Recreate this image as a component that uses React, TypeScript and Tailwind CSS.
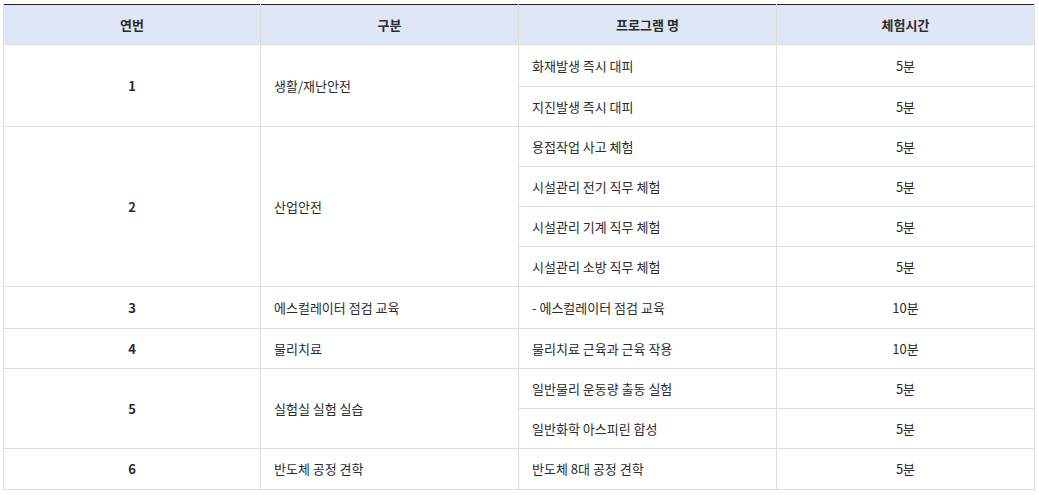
const rows = [
  {
    no: '1',
    group: '생활/재난안전',
    items: [
      { name: '화재발생 즉시 대피', time: '5분', h: 'h-[42px]' },
      { name: '지진발생 즉시 대피', time: '5분', h: 'h-[40px]' },
    ],
  },
  {
    no: '2',
    group: '산업안전',
    items: [
      { name: '용접작업 사고 체험', time: '5분', h: 'h-[40px]' },
      { name: '시설관리 전기 직무 체험', time: '5분', h: 'h-[40px]' },
      { name: '시설관리 기계 직무 체험', time: '5분', h: 'h-[40px]' },
      { name: '시설관리 소방 직무 체험', time: '5분', h: 'h-[40px]' },
    ],
  },
  { no: '3', group: '에스컬레이터 점검 교육', items: [{ name: '- 에스컬레이터 점검 교육', time: '10분', h: 'h-[42px]' }] },
  { no: '4', group: '물리치료', items: [{ name: '물리치료 근육과 근육 작용', time: '10분', h: 'h-[40px]' }] },
  {
    no: '5',
    group: '실험실 실험 실습',
    items: [
      { name: '일반물리 운동량 출동 실험', time: '5분', h: 'h-[40px]' },
      { name: '일반화학 아스피린 합성', time: '5분', h: 'h-[40px]' },
    ],
  },
  { no: '6', group: '반도체 공정 견학', items: [{ name: '반도체 8대 공정 견학', time: '5분', h: 'h-[41px]' }] },
];

const App = () => {
  return (
    <div
      className="w-[1039px] h-[495px] bg-white pl-[3px] pt-[4px]"
      style={{ fontFamily: '"Noto Sans CJK KR", "Noto Sans", sans-serif' }}
    >
      <table className="w-[1031px] table-fixed border-collapse text-[13px] text-[#2b2b2b]">
        <colgroup>
          <col className="w-[257px]" />
          <col className="w-[258px]" />
          <col className="w-[258px]" />
          <col className="w-[258px]" />
        </colgroup>
        <thead>
          <tr className="h-[40px] bg-[#dfe7f6] border-t border-t-[#222]">
            <th className="border-x border-b border-[#ddd] font-bold text-center">연번</th>
            <th className="border-x border-b border-[#ddd] font-bold text-center">구분</th>
            <th className="border-x border-b border-[#ddd] font-bold text-center">프로그램 명</th>
            <th className="border-x border-b border-[#ddd] font-bold text-center">체험시간</th>
          </tr>
        </thead>
        <tbody>
          {rows.map((row) =>
            row.items.map((item, i) => (
              <tr key={row.no + '-' + i} className={item.h}>
                {i === 0 && (
                  <>
                    <td rowSpan={row.items.length} className="border border-[#ddd] text-center font-bold">
                      {row.no}
                    </td>
                    <td rowSpan={row.items.length} className="border border-[#ddd] pl-[13px]">
                      {row.group}
                    </td>
                  </>
                )}
                <td className="border border-[#ddd] pl-[13px]">{item.name}</td>
                <td className="border border-[#ddd] text-center">{item.time}</td>
              </tr>
            ))
          )}
        </tbody>
      </table>
    </div>
  );
};

export default App;
